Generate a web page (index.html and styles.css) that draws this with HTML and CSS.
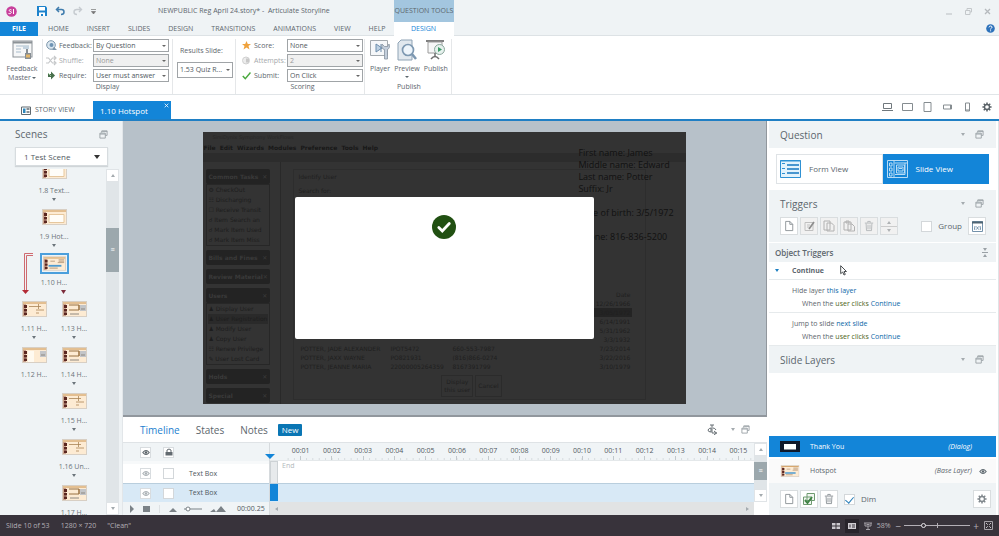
FILE: index.html
```html
<!DOCTYPE html>
<html lang="en">
<head>
    <meta charset="utf-8">
    <title>NEWPUBLIC Reg April 24.story* - Articulate Storyline</title>
    <link rel="stylesheet" href="styles.css">
</head>
<body>
    <!-- icon sprite -->
    <svg class="sprite" aria-hidden="true">
        <symbol id="pop" viewBox="0 0 10 10"><path d="M3 3V1h6v5H7M3.500 1.500h5.500M1 3.500h6v5.500H1zM1 4.500h6" fill="none" stroke="#9aa1a6"/></symbol>
        <symbol id="eye" viewBox="0 0 10 8"><path d="M1 4Q5-1 9 4Q5 9 1 4z" fill="none" stroke="currentColor" stroke-width="1.300"/><circle cx="5" cy="4" r="1.500" fill="currentColor"/></symbol>
        <symbol id="page" viewBox="0 0 12 14"><path d="M2 1.500h5l3.500 3.500v7.500H2zM7 1.500V5h3.500" fill="#fff" stroke="currentColor"/></symbol>
        <symbol id="gear" viewBox="0 0 12 12"><path d="M6 .5v2M6 9.500v2M.5 6h2M9.500 6h2M2.100 2.100l1.500 1.500M8.400 8.400l1.500 1.500M9.900 2.100L8.400 3.600M3.600 8.400L2.100 9.900" stroke="currentColor" stroke-width="1.800"/><circle cx="6" cy="6" r="3" fill="none" stroke="currentColor" stroke-width="1.600"/></symbol>
        <symbol id="trash" viewBox="0 0 12 14"><path d="M1 3.500h10M4.500 3V1.500h3V3M2.500 4l.5 8.500h6L9.500 4M4.800 5.500v5.500M7.200 5.500v5.500" fill="none" stroke="currentColor"/></symbol>
        <symbol id="thumb" viewBox="0 0 25 16"><rect x=".5" y=".5" width="24" height="15" fill="#fdebd3" stroke="#d8cfc4"/><path d="M1 2h23" stroke="#c9924f"/><path d="M1 3h3v12H1z" fill="#c9a18c"/><path d="M2 4h3v3H2zM2 8h3v2.500H2zM2 11.500h3V14H2z" fill="#5a2620"/></symbol>
        <symbol id="table" viewBox="0 0 25 16"><use href="#thumb"/><path d="M8 5.500h5M17 4h6M17 5.500h6M16 7h7" stroke="#a9896b" stroke-width=".8"/><path d="M6 10.500h14" stroke="#4d9bd0" stroke-width="2"/><path d="M7 13h9" stroke="#9a7a5a" stroke-width=".8"/></symbol>
        <symbol id="blank" viewBox="0 0 25 16"><use href="#thumb"/><path d="M7 5.500h15v8H7z" fill="#fffdf8" stroke="#e6c79d"/></symbol>
        <symbol id="form" viewBox="0 0 25 16"><use href="#thumb"/><path d="M7 4h10v5H7M17 4v5" fill="none" stroke="#987040"/><path d="M18 4h6v6h-6z" fill="#c3c5c8"/><path d="M19 8h4M8 13h9" stroke="#8e8880"/></symbol>
        <symbol id="fade" viewBox="0 0 25 16"><use href="#thumb"/><path d="M6 4h6v11H6z" fill="#fffaf0"/><path d="M18 4h6v6h-6z" fill="#c3c5c8"/><path d="M19 8h4" stroke="#8e8880"/></symbol>
        <symbol id="lines" viewBox="0 0 25 16"><use href="#thumb"/><path d="M7 5.500h12M16.500 3v5M14 9h8M14 12h3" stroke="#aa8455" stroke-width=".8"/></symbol>
    </svg>

    <header class="titlebar">
        <div class="quick">
            <svg width="11" height="11" viewBox="0 0 11 11"><circle cx="5.500" cy="5.500" r="5.300" fill="#c8409c"/><path d="M5.500 4C3 2.500 2.500 5.500 4.500 5.500S5 8.500 2.500 7.500M7.500 3v5" fill="none" stroke="#fff"/></svg>
            <svg class="save" width="10" height="10" viewBox="0 0 10 10"><path d="M0 0h8.500L10 1.500V10H0z" fill="#1c82cc"/><path d="M2 1h6v3.500H2zM2 6.500h6V10H6V8H4v2H2z" fill="#fff"/></svg>
            <svg width="10" height="10" viewBox="0 0 10 10"><path d="M4 1L1.500 3.500L4 6M2 3.500h4.500q2.500 0 2.500 2.500t-3 2.500" fill="none" stroke="#3f7cad" stroke-width="1.500"/></svg>
            <svg width="10" height="10" viewBox="0 0 10 10"><path d="M6 1l2.500 2.500L6 6M8 3.500H4Q1 3.500 1 6t3 2.500" fill="none" stroke="#c6cbd0" stroke-width="1.400"/></svg>
            <svg width="5" height="5" viewBox="0 0 5 5"><path d="M0 .5h5M.5 2.500h4L2.500 5z" stroke="#777" stroke-width=".7" fill="#777"/></svg>
        </div>
        <div class="doc-title">NEWPUBLIC Reg April 24.story* - &nbsp;Articulate Storyline</div>
        <div class="context-tools">QUESTION TOOLS</div>
        <div class="window-btns">
            <svg width="7" height="7" viewBox="0 0 7 7"><path d="M0 6h6" stroke="#b9bdc1"/></svg>
            <svg width="7" height="7" viewBox="0 0 7 7"><path d="M2 2V.5h4.500V4H5M.5 2.500H5v4H.5z" fill="none" stroke="#c3c7ca"/></svg>
            <svg width="7" height="7" viewBox="0 0 7 7"><path d="M1 1l5 5M6 1L1 6" stroke="#b5b9bd" stroke-width="1.300"/></svg>
        </div>
    </header>

    <nav class="menu">
        <a class="file" href="#">FILE</a>
        <a href="#">HOME</a>
        <a href="#">INSERT</a>
        <a href="#">SLIDES</a>
        <a href="#">DESIGN</a>
        <a href="#">TRANSITIONS</a>
        <a href="#">ANIMATIONS</a>
        <a href="#">VIEW</a>
        <a href="#">HELP</a>
        <a class="current" href="#">DESIGN</a>
        <svg class="help" width="9" height="9" viewBox="0 0 9 9"><circle cx="4.500" cy="4.500" r="4.300" fill="#2d72bb"/><path d="M3 3.400Q3.200 2 4.600 2T6 3.300Q6 4 4.600 4.800V5.500M4.600 6.300v1" fill="none" stroke="#fff"/></svg>
    </nav>

    <section class="ribbon">
        <div class="group master">
            <button class="big">
                <svg width="21" height="20" viewBox="0 0 21 20"><rect x="1" y="1" width="19" height="16" fill="#f6f7f8" stroke="#8c9297"/><path d="M1 2.500h19" stroke="#8c9297" stroke-width="2"/><path d="M4 6h13M4 9h5M4 12h5" stroke="#a9bccb"/><path d="M11 6h6v3h-6z" fill="#c4d3df"/><path d="M13 19v-6h1V9h2v4h3v6z" fill="#878e94"/><path d="M14 14.500h4v3h-4z" fill="#e3b66a"/></svg>
                Feedback<br>Master<i class="tri"></i>
            </button>
        </div>
        <div class="group">
            <div class="fields">
                <svg width="11" height="11" viewBox="0 0 11 11"><circle cx="5" cy="5" r="4.300" fill="#dbe7f0" stroke="#7d96ab"/><circle cx="5.500" cy="5" r="2" fill="#6e93b4"/><path d="M8 7l3 3H6" fill="#7d96ab"/></svg>
                <label for="feedback">Feedback:</label>
                <span class="dd"><select id="feedback"><option>By Question</option></select></span>
                <svg width="11" height="11" viewBox="0 0 11 11"><path d="M0 3h2.500l4 5H9M0 8h2.500l4-5H9M8 1l2 2-2 2M8 6l2 2-2 2" fill="none" stroke="#c5c7c9" stroke-width="1.200"/></svg>
                <label class="off" for="shuffle">Shuffle:</label>
                <span class="dd"><select id="shuffle" disabled><option>None</option></select></span>
                <svg width="11" height="11" viewBox="0 0 11 11"><path d="M2 4h3V1.500l4 4-4 4V7H2z" fill="#476f4b"/><path d="M2 3l3 3" stroke="#9cc19c"/></svg>
                <label for="require">Require:</label>
                <span class="dd"><select id="require"><option>User must answer</option></select></span>
            </div>
            <div class="caption">Display</div>
        </div>
        <div class="group results">
            <label for="results">Results Slide:</label>
            <span class="dd"><select id="results"><option>1.53 Quiz R...</option></select></span>
        </div>
        <div class="group scoring">
            <div class="fields">
                <svg width="9" height="9" viewBox="0 0 9 9"><path d="M4.500 0l1.300 3H9L6.500 5l1 3.500-3-2-3 2 1-3.500L0 3h3.200z" fill="#efa23d"/></svg>
                <label for="score">Score:</label>
                <span class="dd"><select id="score"><option>None</option></select></span>
                <svg width="9" height="9" viewBox="0 0 9 9"><circle cx="4" cy="4.500" r="3.500" fill="#ececec" stroke="#d0d0d0"/><path d="M4 2.500v4h3v-4z" fill="#c8c8c8"/></svg>
                <label class="off" for="attempts">Attempts:</label>
                <span class="dd"><select id="attempts" disabled><option>2</option></select></span>
                <svg width="9" height="9" viewBox="0 0 9 9"><path d="M.8 5l2.500 2.700L8.500 1.500" fill="none" stroke="#4aa93e" stroke-width="1.500"/></svg>
                <label for="submit">Submit:</label>
                <span class="dd"><select id="submit"><option>On Click</option></select></span>
            </div>
            <div class="caption">Scoring</div>
        </div>
        <div class="group publish">
            <div class="bigs">
                <button class="big">
                    <svg width="20" height="22" viewBox="0 0 20 22"><path d="M.5 1.500h17v15H.5z" fill="#f5f7f9" stroke="#a3a9ae"/><path d="M6 5l6 4-6 4zM11 5v8" fill="#bcd0e2" stroke="#6d8dac"/><path d="M12 5q-1 5 2.500 5.500V20h3V10.500Q20.500 9 19 5l-1.500 2.500h-3z" fill="#c3cedb" stroke="#8793a0" stroke-width=".8"/></svg>
                    Player
                </button>
                <button class="big">
                    <svg width="20" height="22" viewBox="0 0 20 22"><path d="M1 4l3-3h11v20H1z" fill="#e1e8ee" stroke="#8fa3b5"/><circle cx="11" cy="11" r="5.500" fill="#eef5fb" stroke="#7d98b1" stroke-width="1.700"/><path d="M15 15l4 5" stroke="#7d98b1" stroke-width="2.500"/></svg>
                    Preview<i class="tri"></i>
                </button>
                <button class="big">
                    <svg width="20" height="22" viewBox="0 0 20 22"><path d="M0 2h18" stroke="#7f7f7f" stroke-width="2"/><path d="M2 3h14v11H2z" fill="#f6f7f7" stroke="#9b9b9b"/><path d="M9 14v4M5 20q4-5 8 0" fill="none" stroke="#6f6f6f" stroke-width="1.500"/><circle cx="13.500" cy="10.500" r="5" fill="#e6f1ed" stroke="#8ba69c"/><path d="M12 8l4 2.500-4 2.500z" fill="#3e9a67"/></svg>
                    Publish
                </button>
            </div>
            <div class="caption">Publish</div>
        </div>
    </section>

    <section class="viewbar">
        <a class="story" href="#">
            <svg width="10" height="9" viewBox="0 0 10 9"><path d="M.5 1h9v7.500h-9z" fill="#fff" stroke="#606a70"/><path d="M2 2.500h2.500V7H2z" fill="#2b86bb"/><path d="M5.500 3h3M5.500 6h3" stroke="#606a70" stroke-width="1.500"/></svg>
            STORY VIEW
        </a>
        <a class="slide-tab" href="#">1.10 Hotspot
            <svg width="5" height="5" viewBox="0 0 5 5"><path d="M.7.7l3.600 3.600M4.300.7L.7 4.300" stroke="#fff" stroke-width=".8"/></svg>
        </a>
        <div class="devices">
            <svg width="11" height="10" viewBox="0 0 11 10"><path d="M1.500 1.500h8v5h-8zM0 8.500h11" fill="none" stroke="#70787d"/></svg>
            <svg width="11" height="10" viewBox="0 0 11 10"><path d="M.5 1.500h10v7H.5z" fill="none" stroke="#858c90"/></svg>
            <svg width="11" height="10" viewBox="0 0 11 10"><path d="M2 .5h7v9H2z" fill="none" stroke="#858c90"/></svg>
            <svg width="11" height="10" viewBox="0 0 11 10"><path d="M1.500 3h8v4h-8zM8.500 3v4" fill="none" stroke="#858c90"/></svg>
            <svg width="11" height="10" viewBox="0 0 11 10"><path d="M3.500 1h4v8h-4zM3.500 8h4" fill="none" stroke="#858c90"/></svg>
            <svg class="dark" width="10" height="10"><use href="#gear"/></svg>
        </div>
    </section>

    <main class="workspace">
        <aside class="scenes">
            <div class="scenes-head"><h2>Scenes</h2><svg width="9" height="9"><use href="#pop"/></svg></div>
            <span class="dd scene-pick"><select aria-label="Scene"><option>1 Test Scene</option></select></span>
            <div class="tree-wrap">
                <div class="tree">
                    <div class="trunk">
                        <div class="node"><svg><use href="#blank"/></svg><span>1.8 Text...</span><i class="tri"></i></div>
                        <div class="node"><svg><use href="#blank"/></svg><span>1.9 Hot...</span><i class="tri"></i></div>
                        <div class="node active"><svg><use href="#table"/></svg><span>1.10 H...</span></div>
                        <svg class="branch" viewBox="0 0 60 46"><path d="M13 -1.500H4.500V35M13 .5H6.500V35" fill="none" stroke="#cf6a70"/><path d="M2 35h7L5.500 39z" fill="#b32a35"/><path d="M41 35h5l-2.500 4z" fill="#7c2c3b"/></svg>
                    </div>
                    <div class="branches">
                        <div>
                            <div class="node"><svg><use href="#lines"/></svg><span>1.11 H...</span><i class="tri"></i></div>
                            <div class="node"><svg><use href="#fade"/></svg><span>1.12 H...</span></div>
                        </div>
                        <div>
                            <div class="node"><svg><use href="#form"/></svg><span>1.13 H...</span><i class="tri"></i></div>
                            <div class="node"><svg><use href="#form"/></svg><span>1.14 H...</span><i class="tri"></i></div>
                            <div class="node"><svg><use href="#lines"/></svg><span>1.15 H...</span><i class="tri"></i></div>
                            <div class="node"><svg><use href="#lines"/></svg><span>1.16 Un...</span><i class="tri"></i></div>
                            <div class="node"><svg><use href="#form"/></svg><span>1.17 H...</span></div>
                        </div>
                    </div>
                </div>
                <div class="scroll">
                    <button aria-label="Up"><i class="tri up"></i></button>
                    <div class="thumb">≡</div>
                    <button aria-label="Down"><i class="tri"></i></button>
                </div>
            </div>
        </aside>

        <section class="center">
            <div class="stage">
                <div class="slide">
                    <div class="app-title">SirsiDynix Symphony WorkFlows</div>
                    <div class="app-menu"><span>File</span><span>Edit</span><span>Wizards</span><span>Modules</span><span>Preference</span><span>Tools</span><span>Help</span></div>
                    <div class="app-tools"></div>
                    <div class="app-body">
                        <div class="tasks">
                            <h4>Common Tasks<b>✕</b></h4>
                            <ul><li>⚙ CheckOut</li><li>☷ Discharging</li><li>☐ Receive Transit</li><li>☌ Item Search an</li><li>☌ Mark Item Used</li><li>☌ Mark Item Miss</li></ul>
                            <h4>Bills and Fines<b>✕</b></h4>
                            <h4>Review Material<b>✕</b></h4>
                            <h4>Users<b>✕</b></h4>
                            <ul><li>♟ Display User</li><li class="sel">♟ User Registration</li><li>♟ Modify User</li><li>♟ Copy User</li><li>☷ Renew Privilege</li><li>✎ User Lost Card</li></ul>
                            <h4>Holds<b>✕</b></h4>
                            <h4>Special<b>✕</b></h4>
                        </div>
                        <div class="search">
                            <p>Identify User</p>
                            <p>Search for:</p>
                            <table class="found">
                                <tr><td></td><td></td><td></td><td>Date</td></tr>
                                <tr><td></td><td></td><td></td><td>12/26/1966</td></tr>
                                <tr class="hit"><td></td><td></td><td></td><td>3/05/1972</td></tr>
                                <tr><td></td><td></td><td></td><td>6/14/1991</td></tr>
                                <tr><td></td><td></td><td></td><td>5/31/1962</td></tr>
                                <tr><td></td><td></td><td></td><td>3/3/1932</td></tr>
                                <tr><td>POTTER, JADE ALEXANDER</td><td>IPOT5472</td><td>660-553-7987</td><td>7/23/2014</td></tr>
                                <tr><td>POTTER, JAXX WAYNE</td><td>PO821931</td><td>(816)866-0274</td><td>3/22/2016</td></tr>
                                <tr><td>POTTER, JEANNE MARIA</td><td>22000005264359</td><td>8167391799</td><td>3/10/1979</td></tr>
                            </table>
                            <div class="choices"><button>Display<br>this user</button><button>Cancel</button></div>
                        </div>
                    </div>
                    <div class="person">First name: James<br>Middle name: Edward<br>Last name: Potter<br>Suffix: Jr<br><br>Date of birth: 3/5/1972<br><br>Phone: 816-836-5200</div>
                    <div class="dialog">
                        <svg width="24" height="24" viewBox="0 0 24 24"><circle cx="12" cy="12" r="12" fill="#215012"/><path d="M6.800 12.500l3.500 3.500 7-7.500" fill="none" stroke="#fff" stroke-width="2.800" stroke-linecap="round"/></svg>
                    </div>
                </div>
            </div>

            <div class="timeline">
                <div class="tl-tabs">
                    <a class="on" href="#">Timeline</a><a href="#">States</a><a href="#">Notes</a><span class="new">New</span>
                    <svg class="pin" width="10" height="11" viewBox="0 0 10 11"><path d="M5 1v8M3 1h4M5 9h5M7 7l2.500 2L7 11" fill="none" stroke="#656d72"/><path d="M1 6q1-2 3-2v4Q1 8 1 6M6 4q2 0 3 2" fill="none" stroke="#656d72"/></svg>
                    <i class="tri"></i>
                    <svg width="9" height="9"><use href="#pop"/></svg>
                </div>
                <div class="tl-main">
                    <div class="tl-left">
                        <div class="tl-row head">
                            <span class="cell dark"><svg width="8" height="7"><use href="#eye"/></svg></span>
                            <span class="cell"><svg width="8" height="8" viewBox="0 0 8 8"><path d="M2 4V2q2-2 4 0v2" fill="none" stroke="#626a70"/><path d="M.5 4h7v3.500h-7z" fill="#626a70"/></svg></span>
                        </div>
                        <div class="tl-row"><span class="cell"><svg width="8" height="7"><use href="#eye"/></svg></span><input type="checkbox" aria-label="Lock Text Box"><span>Text Box</span></div>
                        <div class="tl-row picked"><span class="cell"><svg width="8" height="7"><use href="#eye"/></svg></span><input type="checkbox" aria-label="Lock selected Text Box"><span>Text Box</span></div>
                        <div class="tl-row play">
                            <svg width="104" height="8" viewBox="0 0 104 8"><path d="M0 0l4 4-4 4zM13 1h7v6h-7zM39 7l4-4 4 4zM80 7l4-3 2 3zM86 7l5-6 5 6z" fill="#7b8287"/><path d="M29.500 0v8" stroke="#dde1e4"/><path d="M54 4h18" stroke="#7b8287"/><circle cx="58" cy="4" r="2" fill="#fff" stroke="#7b8287"/></svg>
                            <span>00:00.25</span>
                        </div>
                    </div>
                    <div class="tl-right">
                        <div class="ruler">
                            <span>00:01</span><span>00:02</span><span>00:03</span><span>00:04</span><span>00:05</span><span>00:06</span><span>00:07</span><span>00:08</span><span>00:09</span><span>00:10</span><span>00:11</span><span>00:12</span><span>00:13</span><span>00:14</span><span>00:15</span>
                            <i class="playhead"></i>
                        </div>
                        <div class="track"><i class="clip"></i><span class="end">End</span></div>
                        <div class="track picked"><i class="clip"></i></div>
                        <div class="hscroll"><i class="tri left"></i><i class="tri right"></i></div>
                    </div>
                    <div class="scroll">
                        <button aria-label="Scroll up"><i class="tri up"></i></button>
                        <div class="thumb">≡</div>
                        <button aria-label="Scroll down"><i class="tri"></i></button>
                    </div>
                </div>
            </div>
        </section>

        <aside class="panels">
            <div class="panel-head"><h2>Question</h2><i class="tri"></i><svg width="9" height="9"><use href="#pop"/></svg></div>
            <div class="switch">
                <button>
                    <svg width="21" height="18" viewBox="0 0 21 18"><path d="M.5 .5h20v17H.5z" fill="#e4f3fc" stroke="#2f91d3"/><path d="M7 5h12M7 9h12M7 13h12" stroke="#1678c0" stroke-width="1.600"/><path d="M2 3.500h3M2 8.500h3M2 13.500h3M0 1h21" stroke="#2f91d3"/></svg>
                    Form View
                </button>
                <button class="on">
                    <svg width="21" height="18" viewBox="0 0 21 18"><path d="M.5 .5h20v17H.5zM2.500 3h2.500v3H2.500zM2.500 8h2.500v3H2.500zM2.500 13h2.500v3H2.500zM7 0v18M7.500 3H20M9.500 5h8v8h-8zM18 3v11.500H8M11 7h5v4h-5zM12 8.500h3" fill="none" stroke="#b8dcf5"/></svg>
                    Slide View
                </button>
            </div>
            <div class="panel-head"><h2>Triggers</h2><i class="tri"></i><svg width="9" height="9"><use href="#pop"/></svg></div>
            <div class="tools">
                <button aria-label="New trigger"><svg width="10" height="12"><use href="#page"/></svg></button>
                <button class="dim" aria-label="Edit"><svg width="11" height="11" viewBox="0 0 11 11"><path d="M1 1.500h8v8H1zM3 4h3M3 6h2" fill="none" stroke="#c0c0c0"/><path d="M10 1L5 8" stroke="#8d8d8d" stroke-width="1.700"/></svg></button>
                <button class="dim" aria-label="Copy"><svg width="12" height="12" viewBox="0 0 12 12"><path d="M1 1h6v9H1zM4 3h4.500L11 5.500V11H4z" fill="#f1f1f1" stroke="#b1b1b1"/></svg></button>
                <button class="dim" aria-label="Paste"><svg width="12" height="12" viewBox="0 0 12 12"><path d="M1 2h7v8H1zM3 1h3v2H3zM5 4h4l2.500 2.500V11H5z" fill="#f1f1f1" stroke="#b1b1b1"/></svg></button>
                <button class="dim" aria-label="Delete"><svg width="10" height="12"><use href="#trash"/></svg></button>
                <button class="dim order" aria-label="Move"><i class="tri up"></i><i class="tri"></i></button>
                <label class="check"><input type="checkbox">Group</label>
                <button aria-label="Variables"><svg width="11" height="11" viewBox="0 0 11 11"><path d="M.5 .5h10v10H.5zM3 5L2.500 8 3 9M8 5l.5 3L8 9M4.500 5.500l2 3M6.500 5.500l-2 3" fill="none" stroke="#7391aa"/><path d="M0 1.500h11" stroke="#4f6473" stroke-width="2"/></svg></button>
            </div>
            <div class="obj-head">Object Triggers
                <svg width="8" height="9" viewBox="0 0 8 9"><path d="M1 4.500h6" stroke="#9aa1a6"/><path d="M2 0h4L4 3zM2 9h4L4 6z" fill="#9aa1a6"/></svg>
            </div>
            <div class="obj-name"><i class="tri"></i>Continue</div>
            <div class="trigger">
                <p>Hide layer <a href="#">this layer</a></p>
                <p class="when">When the <em>user clicks</em> <a href="#">Continue</a></p>
            </div>
            <div class="trigger">
                <p>Jump to slide <a href="#">next slide</a></p>
                <p class="when">When the <em>user clicks</em> <a href="#">Continue</a></p>
            </div>
            <svg class="cursor" width="7" height="11" viewBox="0 0 7 11"><path d="M.7 .7v8l2-1.700 1.300 3 1.300-.6L4 6.500h2.500z" fill="#fff" stroke="#4b4f52"/></svg>
            <div class="panel-head"><h2>Slide Layers</h2><i class="tri"></i><svg width="9" height="9"><use href="#pop"/></svg></div>
            <div class="layer-list">
                <div class="layer on">
                    <svg width="20" height="11" viewBox="0 0 20 11"><path d="M0 0h20v11H0z" fill="#10192a"/><path d="M4 3h12v5.500H4z" fill="#fff"/></svg>
                    <span>Thank You</span><em>(Dialog)</em>
                </div>
                <div class="layer">
                    <svg width="20" height="12" viewBox="0 0 25 16"><use href="#table"/></svg>
                    <span>Hotspot</span><em>(Base Layer)</em><svg width="8" height="7"><use href="#eye"/></svg>
                </div>
            </div>
            <div class="tools bottom">
                <button aria-label="New layer"><svg width="10" height="12"><use href="#page"/></svg></button>
                <button aria-label="Duplicate layer"><svg width="12" height="12" viewBox="0 0 12 12"><path d="M4 .5h7.500v7H4zM.5 4h8v7.500h-8z" fill="#f1f6f0" stroke="#6e9a70"/><path d="M2 7l2.500 3L9 4" fill="none" stroke="#3f8345" stroke-width="2"/></svg></button>
                <button aria-label="Delete layer"><svg width="10" height="12"><use href="#trash"/></svg></button>
                <label class="check"><input type="checkbox" checked>Dim</label>
                <button aria-label="Layer settings"><svg width="10" height="10"><use href="#gear"/></svg></button>
            </div>
        </aside>
    </main>

    <footer class="status">
        <span>Slide 10 of 53</span><span>1280 × 720</span><span>"Clean"</span>
        <div class="zoom">
            <svg width="8" height="8" viewBox="0 0 8 8"><path d="M0 1h3.500v2.500H0zM4.500 1H8v2.500H4.500zM0 4.500h3.500V7H0zM4.500 4.500H8V7H4.500z" fill="#ccc9ce"/></svg>
            <svg class="pressed" width="14" height="14" viewBox="-3 -3 14 14"><path d="M0 1h8v6H0z" fill="#d0cdd2"/><path d="M2 2.500v3M4 3h3M4 5h3" stroke="#38333b"/></svg>
            <svg width="8" height="8" viewBox="0 0 8 8"><path d="M0 1h8M1 1v3h6V1M4 4v4M2 7.500h4M2.500 2.500h3" fill="none" stroke="#a5a1a8"/></svg>
            <span>58%</span>
            <span class="slider"><span>−</span><input type="range" min="0" max="100" value="28" aria-label="Zoom"><span>+</span></span>
            <svg width="9" height="9" viewBox="0 0 9 9"><path d="M.5 .5h8v8h-8z" fill="none" stroke="#a5a1a8"/><path d="M2 2l5 5M7 2L2 7" stroke="#c5c2c8"/><path d="M3.500 3.500h2v2h-2z" fill="#38333b"/></svg>
        </div>
    </footer>
</body>
</html>
```
FILE: styles.css
```css
* {
    box-sizing: border-box;
}

body {
    margin: 0;
    height: 100vh;
    display: flex;
    flex-direction: column;
    overflow: hidden;
    background: #fff;
    color: #5c666d;
    font: 7px/10px "Open Sans", sans-serif;
}

h2, h4, p, ul {
    margin: 0;
    padding: 0;
    font-weight: normal;
}

a {
    color: inherit;
    text-decoration: none;
}

em {
    font-style: normal;
}

svg {
    flex: none;
    display: block;
}

button {
    padding: 0;
    border: none;
    background: none;
    color: inherit;
    font: inherit;
}

.sprite {
    position: absolute;
    width: 0;
    height: 0;
}

.dark {
    color: #596167;
}

.tri {
    display: inline-block;
    flex: none;
    border: 2px solid transparent;
    border-top: 3px solid currentColor;
    border-bottom: 0;
}

.tri.up {
    border-top: 0;
    border-bottom: 3px solid currentColor;
}

.tri.left {
    border: 2px solid transparent;
    border-left: 0;
    border-right: 3px solid currentColor;
}

.tri.right {
    border: 2px solid transparent;
    border-right: 0;
    border-left: 3px solid currentColor;
}

/* title bar and menu */
.titlebar {
    flex: none;
    display: flex;
    height: 22px;
    background: #eff3f5;
}

.quick {
    display: flex;
    align-items: center;
    gap: 8px;
    width: 158px;
    padding-left: 6px;
}

.quick .save {
    margin-left: 12px;
}

.doc-title {
    width: 236px;
    line-height: 22px;
}

.context-tools {
    width: 60px;
    background: #a3c6df;
    text-align: center;
    line-height: 22px;
    white-space: nowrap;
}

.window-btns {
    display: flex;
    align-items: center;
    gap: 12px;
    margin-left: auto;
    padding-right: 8px;
}

.menu {
    flex: none;
    display: flex;
    align-items: center;
    gap: 18px;
    height: 14px;
    background: #eff3f5;
    border-bottom: 1px solid #dde2e5;
    line-height: 14px;
}

.menu .file {
    width: 38px;
    margin-right: -8px;
    background: #1385d8;
    color: #fff;
    font-weight: bold;
    text-align: center;
}

.menu .current {
    width: 60px;
    margin-left: -10px;
    background: #fff;
    color: #1385d8;
    text-align: center;
}

.menu .help {
    margin-left: auto;
    margin-right: 4px;
}

/* ribbon */
.ribbon {
    flex: none;
    display: flex;
    height: 59px;
    padding-top: 3px;
    border-bottom: 1px solid #e1e5e8;
}

.ribbon .tri {
    border-top-width: 2px;
}

.group {
    display: flex;
    flex-direction: column;
    justify-content: space-between;
    padding: 0 3px;
    border-right: 1px solid #e5e7e9;
}

.master {
    width: 43px;
}

.caption {
    padding-bottom: 2px;
    text-align: center;
}

.big {
    display: flex;
    flex-direction: column;
    align-items: center;
    line-height: 9px;
}

.big svg {
    margin-bottom: 3px;
}

.publish .tri {
    margin-top: 3px;
}

.master .big {
    display: block;
    width: 38px;
    text-align: center;
}

.master svg {
    margin: 1px auto 4px;
}

.master .tri {
    margin: 0 0 1px 1px;
}

.fields {
    display: grid;
    grid-template-columns: 11px 32px 76px;
    align-items: center;
    gap: 2px;
}

.scoring {
    padding: 0 1px 0 6px;
}

.scoring .fields {
    grid-template-columns: 10px 31px 76px;
}

.fields label,
.results label {
    white-space: nowrap;
}

.fields .off {
    color: #a5a9ac;
}

.dd {
    position: relative;
    display: block;
}

.dd::after {
    content: "";
    position: absolute;
    right: 3px;
    top: 6px;
    border: 2px solid transparent;
    border-top-color: #666;
    border-bottom: 0;
    pointer-events: none;
}

select {
    display: block;
    appearance: none;
    width: 100%;
    height: 13px;
    padding: 0 2px;
    border: 1px solid #a0a4a7;
    border-radius: 0;
    background: #fff;
    color: #50585e;
    font: inherit;
}

select:disabled {
    background: #f0f0f0;
    color: #999;
    opacity: 1;
}

.results {
    justify-content: flex-start;
    gap: 6px;
    width: 63px;
    padding: 7px 2px 0 4px;
}

.results label {
    padding-left: 3px;
}

.results select {
    height: 16px;
}

.results .dd::after {
    top: 7px;
}

.publish {
    padding: 0 3px 0 5px;
}

.bigs {
    display: flex;
    gap: 4px;
}

/* story view / slide tabs */
.viewbar {
    flex: none;
    display: flex;
    align-items: flex-end;
    height: 26px;
    padding-left: 21px;
    border-bottom: 2px solid #1f7fc4;
}

.story {
    display: flex;
    align-items: center;
    gap: 4px;
    width: 72px;
    height: 18px;
}

.slide-tab {
    display: flex;
    justify-content: space-between;
    width: 78px;
    padding: 2px 2px 0 7px;
    background: #1385d8;
    color: #fff;
    font-size: 8px;
    line-height: 16px;
}

.devices {
    display: flex;
    align-items: center;
    gap: 9px;
    height: 24px;
    margin-left: auto;
    padding-right: 7px;
}

/* workspace */
.workspace {
    flex: 1;
    display: flex;
    min-height: 0;
}

h2 {
    font-size: 10px;
    line-height: 14px;
}

.scenes {
    flex: none;
    display: flex;
    flex-direction: column;
    width: 123px;
    padding-right: 3px;
    background: #eff3f5;
    border-right: 1px solid #e2e6e9;
}

.scenes-head {
    display: flex;
    align-items: center;
    justify-content: space-between;
    padding: 6px 11px 6px 15px;
}

.scene-pick {
    width: 93px;
    margin-left: 15px;
    font-size: 8px;
}

.scene-pick select {
    height: 19px;
    padding-left: 8px;
    border-color: #d7dcdf;
    box-shadow: 0 1px 1px #d0d5d8;
}

.scene-pick::after {
    right: 8px;
    top: 8px;
    border-width: 4px 3px 0;
    border-top-color: #333;
}

.tree-wrap {
    flex: 1;
    display: flex;
    min-height: 0;
    padding-top: 3px;
}

.tree {
    flex: 1;
    overflow: hidden;
    color: #6b747a;
}

.node {
    display: flex;
    flex-direction: column;
    align-items: center;
    width: 40px;
    height: 46px;
    white-space: nowrap;
}

.node svg {
    width: 25px;
    height: 16px;
    margin-bottom: 7px;
}

.node .tri {
    margin-top: 2px;
}

.node.active svg {
    width: 29px;
    height: 21px;
    margin: -2px 0 4px;
    padding: 1px;
    border: 2px solid #4b9fdc;
}

/* the list is scrolled a few pixels down */
.trunk {
    position: relative;
    margin-top: -6px;
    padding-left: 34px;
}

.branch {
    position: absolute;
    left: 20px;
    bottom: 0;
    width: 60px;
    height: 46px;
    overflow: visible;
}

.branches {
    display: flex;
    padding-left: 14px;
}

.scroll {
    flex: none;
    display: flex;
    flex-direction: column;
    width: 13px;
    background: #e0e5e8;
    color: #a4abaf;
}

.scroll button {
    flex: none;
    display: flex;
    align-items: center;
    justify-content: center;
    height: 13px;
    background: #fff;
    border: 1px solid #e0e4e7;
}

.scroll .thumb {
    background: #9ca8ad;
    color: #fff;
    text-align: center;
}

.scenes .thumb {
    height: 44px;
    margin: 46px 0 auto;
    line-height: 44px;
}

.center {
    flex: 1;
    display: flex;
    flex-direction: column;
    min-width: 0;
}

.stage {
    flex: 1;
    display: flex;
    align-items: center;
    justify-content: center;
    min-height: 0;
    background: #b7c1c9;
    border-bottom: 2px solid #91979d;
    border-right: 1px solid #91979d;
}

/* dimmed slide */
.slide {
    position: relative;
    display: flex;
    flex-direction: column;
    width: 75%;
    aspect-ratio: 16 / 9;
    overflow: hidden;
    background: #333;
    color: #1d1d1d;
    font: 6px/10px "DejaVu Sans", sans-serif;
}

.app-title {
    padding-left: 9px;
    color: #272727;
    font-size: 5px;
}

.app-menu {
    display: flex;
    gap: 4px;
    color: #181818;
    font-weight: bold;
    line-height: 11px;
}

.app-tools {
    height: 9px;
    background: #2c2c2c;
}

.app-body {
    flex: 1;
    display: flex;
    min-height: 0;
}

.tasks {
    width: 78px;
    padding: 7px 10px 0 3px;
    border-right: 1px solid #292929;
    white-space: nowrap;
}

.tasks h4 {
    display: flex;
    justify-content: space-between;
    margin-bottom: 4px;
    padding: 0 3px 0 2px;
    border-radius: 2px;
    background: #232323;
    color: #3a3a3a;
    font-weight: bold;
    line-height: 15px;
}

.tasks ul {
    margin: -4px 0 4px;
    padding: 0 1px;
    border: 1px solid #272727;
    list-style: none;
    overflow: hidden;
}

.tasks .sel {
    background: #2a2a2a;
}

.search {
    flex: 1;
    display: flex;
    flex-direction: column;
    margin: 7px 40px 4px 12px;
    padding-left: 4px;
    border: 1px solid #2d2d2d;
    color: #1f1f1f;
}

.search p {
    line-height: 14px;
}

.found {
    margin-top: auto;
    width: 334px;
    border-spacing: 0;
    table-layout: fixed;
    white-space: nowrap;
    line-height: 9px;
}

.found td {
    padding: 0 2px;
    height: 9px;
}

.found td:nth-child(1) {
    width: 90px;
}

.found td:nth-child(2) {
    width: 62px;
}

.found td:last-child {
    width: 52px;
    text-align: right;
}

.found .hit {
    background: #242424;
}

.choices {
    display: flex;
    justify-content: center;
    gap: 2px;
    padding: 4px 0 2px;
    line-height: 8px;
}

.choices button {
    height: 22px;
    padding: 0 2px;
    border: 1px solid #2b2b2b;
}

.person {
    position: absolute;
    left: 375px;
    top: 15px;
    color: #111;
    font: 9px/12px "Open Sans", sans-serif;
    white-space: nowrap;
}

.dialog {
    position: absolute;
    left: 19%;
    top: 24%;
    width: 62%;
    height: 52%;
    padding-top: 18px;
    border-radius: 2px;
    background: #fff;
}

.dialog svg {
    margin: 0 auto;
}

/* timeline */
.timeline {
    flex: none;
}

.tl-tabs {
    display: flex;
    align-items: center;
    height: 26px;
    padding: 0 17px;
    gap: 16px;
    font-size: 10px;
    border-bottom: 1px solid #dfe3e6;
}

.tl-tabs .on {
    color: #1b80cf;
}

.tl-tabs .new {
    margin-left: -6px;
    padding: 0 4px;
    border-radius: 1px;
    background: #0a76b4;
    color: #fff;
    font-size: 8px;
    line-height: 12px;
}

.tl-tabs .pin {
    margin-left: auto;
    margin-right: -2px;
}

.tl-tabs .tri {
    margin-right: -10px;
    color: #a4abaf;
}

.tl-main {
    display: flex;
    height: 72px;
}

.tl-left {
    width: 147px;
    border-right: 1px solid #d6dadd;
}

.tl-row {
    display: flex;
    align-items: center;
    height: 19px;
    gap: 12px;
    padding-left: 17px;
    color: #4f585e;
}

.tl-row.head {
    height: 21px;
    background: #f0f4f6;
    border-bottom: 3px solid #f7f9fa;
}

.tl-row.picked,
.track.picked {
    background: #d8e9f6;
    border-top: 1px solid #b9cedd;
}

.cell {
    display: flex;
    align-items: center;
    justify-content: center;
    width: 11px;
    height: 11px;
    border: 1px solid #d8dcdf;
    background: #fff;
}

.tl-row:not(.head) .cell {
    color: #a9b0b4;
}

.tl-row > span:last-child:not(.cell) {
    margin-left: 3px;
}

input[type="checkbox"] {
    appearance: none;
    flex: none;
    width: 11px;
    height: 11px;
    margin: 0;
    border: 1px solid #d3d7da;
    background: #fff;
}

.tl-row.play {
    height: 13px;
    gap: 0;
    padding-left: 7px;
    background: #f0f4f6;
    white-space: nowrap;
}

.tl-right {
    flex: 1;
    min-width: 0;
}

.ruler {
    position: relative;
    display: flex;
    height: 18px;
    padding-left: 15px;
    background: #f0f4f6;
    border-bottom: 1px solid #e4e8ea;
    color: #50595f;
}

.ruler span {
    flex: 1;
    padding-top: 3px;
    text-align: center;
    background:
        linear-gradient(#c3c9cd, #c3c9cd) center bottom / 1px 4px no-repeat,
        linear-gradient(90deg, transparent 45%, #d3d8db 45%, #d3d8db 60%, transparent 60%) left bottom / 20% 2px repeat-x;
}

.playhead {
    position: absolute;
    left: -5px;
    bottom: 1px;
    border: 5px solid transparent;
    border-top-color: #1385d8;
    border-bottom: 0;
}

.track {
    display: flex;
    height: 22px;
}

.track.picked {
    height: 19px;
    padding-bottom: 1px;
}

.clip {
    width: 8px;
    margin-right: 4px;
    background: #e7eaec;
    border: 1px solid #cdd2d5;
    border-bottom: 0;
}

.picked .clip {
    background: #1385d8;
    border-color: #1385d8;
}

.end {
    color: #b3b9bd;
}

.hscroll {
    display: flex;
    align-items: center;
    justify-content: space-between;
    height: 13px;
    padding: 0 5px;
    background: #e1e3e4;
    color: #a4abaf;
}

.timeline .scroll {
    height: 59px;
}

.timeline .thumb {
    height: 18px;
    margin: 6px 0 auto;
    line-height: 18px;
}

/* right hand panels */
.panels {
    position: relative;
    flex: none;
    display: flex;
    flex-direction: column;
    width: 232px;
    padding: 0 2px;
    border-right: 1px solid #dfe3e6;
}

.panel-head {
    display: flex;
    align-items: center;
    flex: none;
    height: 27px;
    padding: 0 12px 0 11px;
    background: #eff3f5;
}

.panel-head .tri {
    margin: 0 10px 0 auto;
    color: #a4abaf;
}

.switch {
    display: flex;
    padding: 6px 7px;
}

.switch button {
    flex: 1;
    display: flex;
    align-items: center;
    gap: 8px;
    height: 30px;
    padding-left: 3px;
    border: 1px solid #dfe3e6;
    font-size: 8px;
}

.switch .on {
    background: #1385d8;
    border-color: #1385d8;
    color: #fff;
}

.tools {
    display: flex;
    align-items: center;
    gap: 2px;
    flex: none;
    padding: 0 10px 7px 11px;
    background: #eff3f5;
}

.tools button {
    display: flex;
    align-items: center;
    justify-content: center;
    width: 18px;
    height: 18px;
    background: #fff;
    border: 1px solid #d9dddf;
    color: #81888d;
}

.tools .dim {
    background: #f1f1f1;
    color: #afb2b4;
}

.tools .order {
    flex-direction: column;
    gap: 5px;
    background: linear-gradient(#ccc, #ccc) center / 100% 1px no-repeat #f1f1f1;
}

.check {
    display: flex;
    align-items: center;
    gap: 6px;
    font-size: 8px;
}

.tools .check {
    margin-left: auto;
    margin-right: 4px;
}

.tools.bottom .check {
    margin-left: 4px;
    margin-right: auto;
}

.check input:checked::after {
    content: "";
    display: block;
    width: 4px;
    height: 7px;
    margin-left: 2px;
    border: solid #267db8;
    border-width: 0 1px 1px 0;
    transform: rotate(40deg);
}

.obj-head {
    display: flex;
    align-items: center;
    justify-content: space-between;
    height: 19px;
    margin-top: 1px;
    padding: 0 7px 0 6px;
    background: #eff3f5;
    font-size: 8px;
    font-weight: 600;
}

.obj-name {
    display: flex;
    align-items: center;
    gap: 13px;
    height: 18px;
    padding-left: 6px;
    border-bottom: 1px solid #e6eaec;
    font-weight: bold;
}

.obj-name .tri {
    color: #1c7fc1;
}

.trigger {
    height: 33px;
    padding: 4px 0 0 23px;
    border-bottom: 1px solid #e6eaec;
}

.trigger p {
    line-height: 13px;
}

.trigger .when {
    padding-left: 10px;
}

.trigger a {
    color: #0d68a8;
}

.trigger em {
    color: #4c6320;
}

.cursor {
    position: absolute;
    left: 73px;
    top: 144px;
}

.layer-list {
    flex: 1;
    display: flex;
    flex-direction: column;
    justify-content: flex-end;
    gap: 2px;
}

.layer {
    display: flex;
    align-items: center;
    height: 24px;
    padding: 0 9px 0 11px;
    background: #fafafa;
}

.layer.on {
    height: 21px;
    background: #1385d8;
    color: #fff;
}

.layer span {
    margin-left: 10px;
}

.layer em {
    margin-left: auto;
    margin-right: 7px;
    font-style: italic;
}

.layer.on em {
    margin-right: 15px;
}

.tools.bottom {
    padding-top: 7px;
    padding-right: 5px;
}

/* status bar */
.status {
    flex: none;
    display: flex;
    align-items: center;
    gap: 11px;
    height: 21px;
    padding: 0 6px;
    background: #38333b;
    color: #b3afb6;
}

.zoom {
    display: flex;
    align-items: center;
    gap: 5px;
    margin-left: auto;
}

.zoom .pressed {
    background: #28242b;
}

.slider {
    display: flex;
    align-items: center;
    gap: 3px;
    font-size: 10px;
}

.slider input {
    appearance: none;
    width: 66px;
    height: 8px;
    margin: 0;
    background:
        linear-gradient(#b3afb6, #b3afb6) center / 1px 5px no-repeat,
        linear-gradient(#b3afb6, #b3afb6) center / 100% 1px no-repeat;
}

.slider input::-webkit-slider-thumb {
    appearance: none;
    width: 5px;
    height: 5px;
    border: 1px solid #e5e3e7;
    border-radius: 50%;
    background: #38333b;
}
```
